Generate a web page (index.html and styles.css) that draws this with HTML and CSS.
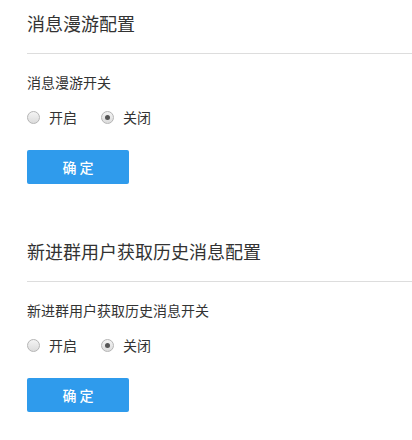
FILE: index.html
```html
<!DOCTYPE html>
<html lang="zh-CN">
<head>
<meta charset="utf-8">
<title>消息配置</title>
<link rel="stylesheet" href="styles.css">
</head>
<body>
<div class="page">
  <section class="section">
    <h2 class="title">消息漫游配置</h2>
    <div class="label">消息漫游开关</div>
    <div class="radios">
      <label class="radio"><span class="dot"></span><span class="rtext">开启</span></label>
      <label class="radio checked"><span class="dot"></span><span class="rtext">关闭</span></label>
    </div>
    <button class="btn">确 定</button>
  </section>
  <section class="section">
    <h2 class="title">新进群用户获取历史消息配置</h2>
    <div class="label">新进群用户获取历史消息开关</div>
    <div class="radios">
      <label class="radio"><span class="dot"></span><span class="rtext">开启</span></label>
      <label class="radio checked"><span class="dot"></span><span class="rtext">关闭</span></label>
    </div>
    <button class="btn">确 定</button>
  </section>
</div>
</body>
</html>
```
FILE: styles.css
```css
html, body {
  margin: 0;
  padding: 0;
  background: #fff;
}
body {
  font-family: "Noto Sans CJK SC", "Noto Sans", sans-serif;
  color: #333;
}
.page {
  padding-left: 27px;
}
.section {
  display: flex;
  flex-direction: column;
  align-items: flex-start;
  padding-bottom: 44px;
}
.title {
  align-self: stretch;
  margin: 0;
  padding: 11px 0 18px;
  font-size: 18px;
  line-height: 24px;
  font-weight: normal;
  color: #333;
  border-bottom: 1px solid #ddd;
}
.label {
  margin-top: 18px;
  font-size: 14px;
  line-height: 20px;
  color: #333;
}
.radios {
  display: flex;
  margin-top: 15px;
  gap: 24px;
}
.radio {
  display: flex;
  align-items: center;
  gap: 9px;
  font-size: 14px;
  line-height: 20px;
  color: #333;
}
.dot {
  width: 11px;
  height: 11px;
  border-radius: 50%;
  border: 1px solid #b5b5b5;
  background: linear-gradient(#f4f4f4, #dcdcdc);
  display: flex;
  align-items: center;
  justify-content: center;
}
.checked .dot::after {
  content: "";
  width: 5px;
  height: 5px;
  border-radius: 50%;
  background: #555;
}
.btn {
  margin-top: 23px;
  width: 102px;
  height: 34px;
  border: none;
  border-radius: 2px;
  background: #2f9bec;
  color: #fff;
  font-family: "Noto Sans CJK SC", sans-serif;
  font-size: 14px;
  font-weight: 500;
  letter-spacing: 0;
  padding: 0;
}
```
